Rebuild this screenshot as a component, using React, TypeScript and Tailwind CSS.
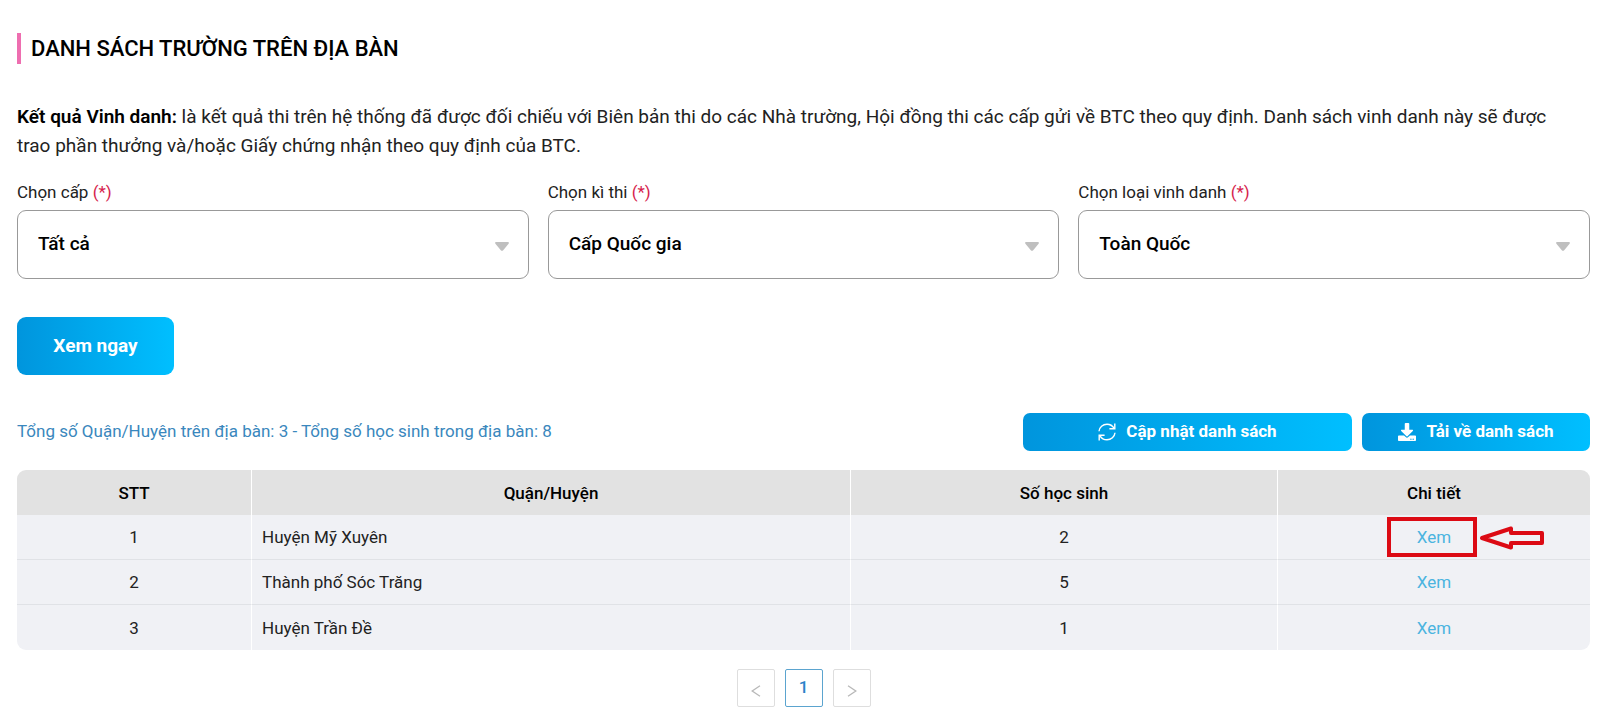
import { useId, useState } from 'react'
import { FaDownload } from 'react-icons/fa'

interface District {
  id: number
  name: string
  students: number
}

const districts: District[] = [
  { id: 1, name: 'Huyện Mỹ Xuyên', students: 2 },
  { id: 2, name: 'Thành phố Sóc Trăng', students: 5 },
  { id: 3, name: 'Huyện Trần Đề', students: 1 },
]

const filters = [
  { label: 'Chọn cấp', options: ['Tất cả'] },
  { label: 'Chọn kì thi', options: ['Cấp Quốc gia'] },
  { label: 'Chọn loại vinh danh', options: ['Toàn Quốc'] },
]

function FilterSelect({ label, options }: { label: string; options: string[] }) {
  const id = useId()
  const [value, setValue] = useState(options[0])

  return (
    <div>
      <label htmlFor={id} className="block text-[17px] leading-6">
        {label} <span className="text-[#d6224c]">(*)</span>
      </label>
      <div className="relative mt-1.5">
        <select
          id={id}
          value={value}
          onChange={event => setValue(event.target.value)}
          className="h-[69px] w-full appearance-none rounded-[9px] border border-[#999] bg-white px-5 text-[19px] font-medium text-black"
        >
          {options.map(option => (
            <option key={option}>{option}</option>
          ))}
        </select>
        <svg viewBox="0 0 14 9" className="pointer-events-none absolute top-8 right-5 h-[9px] w-3.5" fill="#bfbfbf">
          <path d="M1.2 0h11.6c1 0 1.4 1 .8 1.7L8.2 8.2c-.6.8-1.8.8-2.4 0L.4 1.7C-.2 1 .2 0 1.2 0z" />
        </svg>
      </div>
    </div>
  )
}

function SyncIcon() {
  return (
    <svg viewBox="0 0 18 18" className="h-[18px] w-[18px]" fill="none" stroke="currentColor" strokeWidth="1.4">
      <path d="M1 8.2C1.4 4.2 4.8 1.2 9 1.2c3 0 5.600 1.600 7 4" />
      <path d="M16.800.4v5.400h-5.400" />
      <path d="M17 9.800c-.4 4-3.800 7-8 7-3 0-5.600-1.600-7-4" />
      <path d="M1.200 17.600v-5.400h5.400" />
    </svg>
  )
}

function HighlightMark() {
  return (
    <>
      <span className="pointer-events-none absolute -top-2 -right-[26px] -bottom-2 -left-[30px] border-4 border-[#dc0a14]" />
      <svg viewBox="0 0 68 26" className="pointer-events-none absolute top-0 left-full ml-[26px] h-[26px] w-[68px]" fill="none">
        <path d="M5 13 34 3.500V8H65V18H34V22.500Z" stroke="#dc0a14" strokeWidth="4" strokeLinejoin="round" />
      </svg>
    </>
  )
}

export default function App() {
  const total = districts.reduce((sum, district) => sum + district.students, 0)

  return (
    <main className="bg-white pt-[33px] pr-2.5 pb-4 pl-[17px] font-[Roboto,sans-serif] text-[#222]">
      <h1 className="border-l-4 border-[#ee6eb0] pl-2.5 text-[22px] leading-[31px] font-medium text-black">
        DANH SÁCH TRƯỜNG TRÊN ĐỊA BÀN
      </h1>

      <p className="mt-[38px] pr-3 text-[19px] leading-[29px]">
        <strong className="font-semibold text-black">Kết quả Vinh danh:</strong> là kết quả thi trên hệ thống đã được đối chiếu với Biên bản thi do các Nhà trường, Hội đồng thi các cấp gửi về BTC theo quy định. Danh sách vinh danh này sẽ được trao phần thưởng và/hoặc Giấy chứng nhận theo quy định của BTC.
      </p>

      <div className="mt-5 grid grid-cols-3 gap-x-[19px]">
        {filters.map(filter => (
          <FilterSelect key={filter.label} label={filter.label} options={filter.options} />
        ))}
      </div>

      <button
        type="button"
        className="mt-[38px] flex h-[58px] w-[157px] items-center justify-center rounded-[9px] bg-linear-to-r from-[#0095dd] to-[#00bfff] text-[19px] font-bold text-white"
      >
        Xem ngay
      </button>

      <div className="mt-[38px] flex items-center justify-between">
        <p className="text-[17px] text-[#3a87bd]">
          Tổng số Quận/Huyện trên địa bàn: {districts.length} - Tổng số học sinh trong địa bàn: {total}
        </p>
        <div className="flex gap-2.5 text-[17px] font-bold text-white">
          <button type="button" className="flex h-[38px] w-[329px] items-center justify-center gap-2.5 rounded-[7px] bg-linear-to-r from-[#0095dd] to-[#00bfff]">
            <SyncIcon />
            Cập nhật danh sách
          </button>
          <button type="button" className="flex h-[38px] w-[228px] items-center justify-center gap-2.5 rounded-[7px] bg-linear-to-r from-[#0095dd] to-[#00bfff]">
            <FaDownload className="h-[18px] w-[18px]" />
            Tải về danh sách
          </button>
        </div>
      </div>

      <div className="mt-[19px] overflow-hidden rounded-[9px]">
        <table className="w-full table-fixed border-separate border-spacing-0 text-center text-[17px] leading-6">
          <colgroup>
            <col className="w-[235px]" />
            <col />
            <col className="w-[427px]" />
            <col className="w-[312px]" />
          </colgroup>
          <thead className="bg-[#e2e2e2] text-black">
            <tr>
              {['STT', 'Quận/Huyện', 'Số học sinh', 'Chi tiết'].map(heading => (
                <th key={heading} className="h-[45px] border-r border-white p-0 font-medium last:border-r-0">
                  {heading}
                </th>
              ))}
            </tr>
          </thead>
          <tbody className="bg-[#f0f1f5]">
            {districts.map((district, index) => (
              <tr key={district.id} className="*:h-[45px] *:border-r *:border-b *:border-r-white *:border-b-[#e0e2e6] *:last:border-r-0 last:*:border-b-0">
                <td>{district.id}</td>
                <td className="px-2.5 text-left">{district.name}</td>
                <td>{district.students}</td>
                <td>
                  <span className="relative inline-block">
                    <a href={`#${district.id}`} className="text-[#4bb4e0]">Xem</a>
                    {index === 0 && <HighlightMark />}
                  </span>
                </td>
              </tr>
            ))}
          </tbody>
        </table>
      </div>

      <nav aria-label="Phân trang" className="mt-[19px] flex justify-center gap-2.5">
        <button type="button" disabled aria-label="Trang trước" className="flex size-[38px] items-center justify-center rounded-xs border border-[#dedede] pt-1.5">
          <svg viewBox="0 0 10 12" className="h-3 w-2.5" fill="none" stroke="#b8b8b8" strokeWidth="1.3">
            <path d="M9 .8 1.2 6 9 11.2" />
          </svg>
        </button>
        <button type="button" aria-current="page" className="size-[38px] rounded-xs border border-[#5ba4cf] text-[17px] font-medium text-[#2b82c9]">
          1
        </button>
        <button type="button" disabled aria-label="Trang sau" className="flex size-[38px] items-center justify-center rounded-xs border border-[#dedede] pt-1.5">
          <svg viewBox="0 0 10 12" className="h-3 w-2.5" fill="none" stroke="#b8b8b8" strokeWidth="1.3">
            <path d="M1 .8 8.8 6 1 11.2" />
          </svg>
        </button>
      </nav>
    </main>
  )
}
